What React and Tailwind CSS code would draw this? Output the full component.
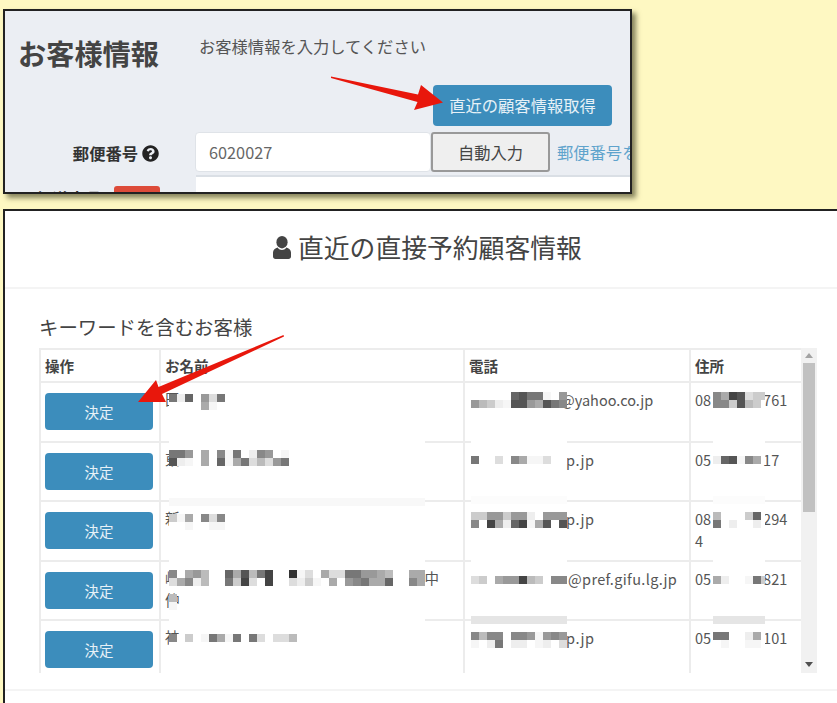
import React from "react";
import { FaQuestionCircle } from "react-icons/fa";

const font = "font-['Noto_Sans_CJK_JP','Noto_Sans',sans-serif]";

const mosaics = [
  // name column
  [169, 394, 7, ["7e6.9d7", "....af."]],
  [169, 450, 15, ["779.a.8f7.e89.f", "5ef.a.6fa7dbd97"]],
  [169, 514, 7, ["cfa.8d8", "..f..ff"]],
  [169, 570, 32, ["8.a9b..6a5b74..3fd.add7799ab..aa", "da8eb..7c4d.4..decf.a.987aa6..8a"]],
  [169, 594, 1, ["b", "f"]],
  [169, 634, 16, ["8.c.f7af7.7d.ddb", "................"]],
  // mail column
  [471, 392, 12, [".....6577f.9", "9bcef559a578"]],
  [471, 448, 12, ["............", "7..d.8affd.."]],
  [471, 512, 12, ["cc99c99e.999", "8.4ae64fa5.5"]],
  [471, 568, 12, ["............", "dc.a994bc.88"]],
  [471, 632, 12, ["8b88.889f989", "f.e7.ee.fe.d"]],
  // phone column
  [713, 392, 6.5, ["8a45dcc", "88c5bc."]],
  [713, 448, 6.5, ["......", "e65f8a."]],
  [713, 512, 6.5, ["b...c6.", "7.e..e."]],
  [713, 568, 6.5, ["......", "ae..f7c"]],
  [713, 632, 6.5, ["77..ea.", ".f..ff."]],
];

const patches = [
  [169, 439, 256, 6, "#ffffff"],
  [169, 498, 256, 8, "#f8f8f8"],
  [169, 558, 256, 6, "#ffffff"],
  [169, 617, 256, 6, "#ffffff"],
  [471, 439, 96, 6, "#ffffff"],
  [471, 496, 96, 8, "#fcfcfc"],
  [471, 558, 96, 6, "#ffffff"],
  [471, 616, 96, 8, "#e5e5e5"],
  [713, 439, 52, 6, "#ffffff"],
  [713, 496, 52, 8, "#fcfcfc"],
  [713, 558, 52, 6, "#ffffff"],
  [713, 616, 52, 8, "#e5e5e5"],
];

function Overlay() {
  return (
    <svg className="absolute left-0 top-0 pointer-events-none" width="837" height="703" viewBox="0 0 837 703">
      {patches.map(([x, y, w, h, c], i) => (
        <rect key={i} x={x} y={y} width={w} height={h} fill={c} />
      ))}
      {mosaics.map(([x, y, w, rows], i) => (
        <g key={i}>
          <rect x={x} y={y} width={w * 8} height={16} fill="#ffffff" />
          {rows.map((row, r) =>
            row.split("").map((d, c) => {
              if (d === ".") return null;
              const fill = d === "f" ? "#f6f6f6" : `#${d}${d}${d}`;
              const bw = Math.min(8, w * 8 - c * 8);
              return bw > 0 ? <rect key={`${r}-${c}`} x={x + c * 8} y={y + r * 8} width={bw} height={8} fill={fill} /> : null;
            })
          )}
        </g>
      ))}
      <polygon points="331,76.5 418,94.5 421,85 443,102.5 414,110 417.5,102 331,78" fill="#e8170c" />
      <polygon points="283.5,335 284,336.5 162,394 166,402 138,402 156,380 158.5,387" fill="#e8170c" />
    </svg>
  );
}

function PersonIcon() {
  return (
    <svg width="18" height="23" viewBox="0 0 18 23" className="mr-[7px] shrink-0">
      <ellipse cx="9" cy="6.2" rx="5.6" ry="6.2" fill="#444" />
      <path d="M0 16.5C0 13.8 2.2 12.6 4.6 11.6C6 13.4 7.4 14 9 14C10.6 14 12 13.4 13.4 11.6C15.8 12.6 18 13.8 18 16.5V20.5C18 22 17 23 15.5 23H2.5C1 23 0 22 0 20.5Z" fill="#444" />
    </svg>
  );
}

function Scrollbar() {
  return (
    <div className="w-[16px] h-full bg-[#f1f1f1] flex flex-col items-center relative">
      <svg width="8" height="5" viewBox="0 0 8 5" className="mt-[5px]">
        <path d="M4 0L8 5H0Z" fill="#a3a3a3" />
      </svg>
      <div className="w-[12px] h-[149px] bg-[#c1c1c1] mt-[5px]" />
      <svg width="8" height="5" viewBox="0 0 8 5" className="mt-auto mb-[6px]">
        <path d="M4 5L8 0H0Z" fill="#505050" />
      </svg>
    </div>
  );
}

const rows = [
  { name: <>田</>, mail: "@yahoo.co.jp", mailCls: "-ml-[4px]", phone: ["08", "761"], h: "h-[60px]" },
  { name: <>東</>, mail: "p.jp", mailCls: "ml-[1px] tracking-[0.6px]", phone: ["05", "17"], h: "h-[59px]" },
  { name: <>新</>, mail: "p.jp", mailCls: "ml-[1px] tracking-[0.6px]", phone: ["08", "294"], extra: "4", h: "h-[60px]" },
  {
    name: (
      <>
        岐<span className="inline-block w-[245px]" />中<br />仲
      </>
    ),
    mail: "@pref.gifu.lg.jp",
    mailCls: "ml-[3px] tracking-[0.35px]",
    phone: ["05", "821"],
    h: "h-[59px]",
  },
  { name: <>神</>, mail: "p.jp", mailCls: "ml-[1px] tracking-[0.6px]", phone: ["05", "101"], h: "h-[60px]" },
];

const cols = "grid grid-cols-[120px_304px_226px_112px]";
const cell = "border-l-2 border-[#ececec] pl-[4px]";

function Table() {
  return (
    <div className="flex w-[778px] h-[325px] overflow-hidden">
      <div className="w-[762px] h-full border-t-2 border-[#ececec] shrink-0">
        <div className={`${cols} h-[33px] text-[14.5px] font-bold text-[#444] leading-[32px] border-b-2 border-[#ececec]`}>
          <div className={cell}>操作</div>
          <div className={cell}>お名前</div>
          <div className={cell}>電話</div>
          <div className={cell}>住所</div>
        </div>
        {rows.map((r, i) => (
          <div key={i} className={`${cols} ${r.h} text-[14.5px] leading-[22px] text-[#555] border-b-2 border-[#ececec]`}>
            <div className={`${cell} pt-[10px]`}>
              <button className="w-[108px] h-[37px] rounded-[4px] bg-[#3c8dbc] text-[#e6f1f7] text-[14.5px]">決定</button>
            </div>
            <div className={`${cell} pt-[5px]`}>{r.name}</div>
            <div className={`${cell} pt-[6px]`}>
              <span className="inline-block w-[96px]" />
              <span className={r.mailCls}>{r.mail}</span>
            </div>
            <div className={`${cell} pt-[6px]`}>
              {r.phone[0]}
              <span className="inline-block w-[52px]" />
              {r.phone[1]}
              {r.extra && (
                <>
                  <br />
                  {r.extra}
                </>
              )}
            </div>
          </div>
        ))}
      </div>
      <Scrollbar />
    </div>
  );
}

export default function App() {
  return (
    <div className={`relative w-[837px] h-[703px] overflow-hidden bg-[#fef8c2] pl-[3px] pt-[9px] ${font}`}>
      <div className="w-[629px] h-[185px] border-2 border-[#222] bg-[#ebeef3] shadow-[4px_4px_5px_rgba(70,70,40,0.65)] overflow-hidden flex flex-col">
        <div className="h-[74px] flex items-start shrink-0 pl-[13px]">
          <h1 className="mt-[22px] text-[28.2px] leading-[40px] font-bold text-[#444] w-[141px] whitespace-nowrap">お客様情報</h1>
          <p className="mt-[23px] ml-[40px] text-[16.3px] leading-[24px] text-[#555] whitespace-nowrap">お客様情報を入力してください</p>
        </div>
        <button className="ml-[428px] w-[179px] h-[41px] shrink-0 rounded-[4px] bg-[#3c8dbc] text-[#e6f1f7] text-[16.3px]">直近の顧客情報取得</button>
        <div className="mt-[6px] h-[40px] flex items-center shrink-0 whitespace-nowrap">
          <div className="w-[154px] shrink-0 flex justify-end items-center gap-[4px] pt-[2px] text-[16.3px] font-bold text-[#333]">
            郵便番号
            <FaQuestionCircle className="w-[17px] h-[17px] text-[#222]" />
          </div>
          <div className="ml-[36px] w-[236px] h-[40px] shrink-0 bg-white rounded-[4px] border border-[#dfe3e8] pl-[13px] text-[16.3px] leading-[38px] text-[#666]">6020027</div>
          <button className="w-[119px] h-[40px] shrink-0 rounded-[3px] border-2 border-[#999] bg-[#efefef] text-[16.3px] text-[#444]">自動入力</button>
          <span className="ml-[7px] text-[16.3px] text-[#5fa3cc]">郵便番号を調べる</span>
        </div>
        <div className="mt-[3px] flex items-start shrink-0 whitespace-nowrap">
          <div className="w-[155px] shrink-0 flex justify-end items-start gap-[13px] pt-[11px]">
            <span className="text-[16.3px] leading-[24px] font-bold text-[#333]">都道府県</span>
            <span className="w-[46px] h-[24px] rounded-[3px] bg-[#dd4b39]" />
          </div>
          <div className="ml-[36px] w-[440px] h-[40px] bg-white border-t-2 border-[#dadfe5] pl-[18px] pt-[11px] text-[16.3px] text-[#666] leading-[24px]">京都府</div>
        </div>
      </div>

      <div className="mt-[15px] w-[834px] h-[494px] bg-white border-l-2 border-t-2 border-[#222] flex flex-col">
        <div className="h-[78px] shrink-0 border-b-2 border-[#f4f4f4] flex items-center pl-[268px] pb-[3px]">
          <PersonIcon />
          <h2 className="text-[25.8px] font-normal text-[#444] whitespace-nowrap">直近の直接予約顧客情報</h2>
        </div>
        <div className="pl-[34px] flex-1 flex flex-col">
          <h3 className="mt-[24px] h-[35px] text-[19.4px] leading-[28px] text-[#444] whitespace-nowrap">キーワードを含むお客様</h3>
          <Table />
          <div className="-ml-[34px] mt-[16px] h-[2px] bg-[#f4f4f4]" />
        </div>
      </div>
      <Overlay />
    </div>
  );
}
